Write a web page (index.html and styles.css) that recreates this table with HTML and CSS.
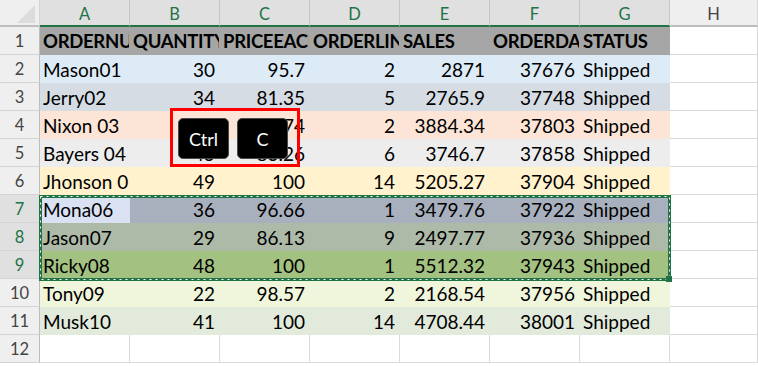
FILE: index.html
```html
<!DOCTYPE html>
<html>
<head>
<meta charset="utf-8">
<link rel="stylesheet" href="styles.css">
</head>
<body>
<div class="sheet">
  <div class="row colhead">
    <div class="corner"><svg width="39" height="25" viewBox="0 0 39 25"><polygon points="17,23 35,5 35,23" fill="#dcdcdc"/></svg></div>
    <div class="ch sel">A</div><div class="ch sel">B</div><div class="ch sel">C</div><div class="ch sel">D</div><div class="ch sel">E</div><div class="ch sel">F</div><div class="ch sel">G</div><div class="ch">H</div>
  </div>
  <div class="row r1">
    <div class="rh">1</div>
    <div class="c b">ORDERNUMBER</div><div class="c b">QUANTITYORDERED</div><div class="c b">PRICEEACH</div><div class="c b">ORDERLINENUMBER</div><div class="c b">SALES</div><div class="c b">ORDERDATE</div><div class="c b">STATUS</div><div class="c e"></div>
  </div>
  <div class="row r2">
    <div class="rh">2</div>
    <div class="c">Mason01</div><div class="c n">30</div><div class="c n">95.7</div><div class="c n">2</div><div class="c n">2871</div><div class="c n">37676</div><div class="c">Shipped</div><div class="c e"></div>
  </div>
  <div class="row r3">
    <div class="rh">3</div>
    <div class="c">Jerry02</div><div class="c n">34</div><div class="c n">81.35</div><div class="c n">5</div><div class="c n">2765.9</div><div class="c n">37748</div><div class="c">Shipped</div><div class="c e"></div>
  </div>
  <div class="row r4">
    <div class="rh">4</div>
    <div class="c">Nixon 03</div><div class="c n">41</div><div class="c n">94.74</div><div class="c n">2</div><div class="c n">3884.34</div><div class="c n">37803</div><div class="c">Shipped</div><div class="c e"></div>
  </div>
  <div class="row r5">
    <div class="rh">5</div>
    <div class="c">Bayers 04</div><div class="c n">45</div><div class="c n">83.26</div><div class="c n">6</div><div class="c n">3746.7</div><div class="c n">37858</div><div class="c">Shipped</div><div class="c e"></div>
  </div>
  <div class="row r6">
    <div class="rh">6</div>
    <div class="c">Jhonson 0</div><div class="c n">49</div><div class="c n">100</div><div class="c n">14</div><div class="c n">5205.27</div><div class="c n">37904</div><div class="c">Shipped</div><div class="c e"></div>
  </div>
  <div class="row r7">
    <div class="rh hs">7</div>
    <div class="c active">Mona06</div><div class="c n">36</div><div class="c n">96.66</div><div class="c n">1</div><div class="c n">3479.76</div><div class="c n">37922</div><div class="c">Shipped</div><div class="c e"></div>
  </div>
  <div class="row r8">
    <div class="rh hs">8</div>
    <div class="c">Jason07</div><div class="c n">29</div><div class="c n">86.13</div><div class="c n">9</div><div class="c n">2497.77</div><div class="c n">37936</div><div class="c">Shipped</div><div class="c e"></div>
  </div>
  <div class="row r9">
    <div class="rh hs">9</div>
    <div class="c">Ricky08</div><div class="c n">48</div><div class="c n">100</div><div class="c n">1</div><div class="c n">5512.32</div><div class="c n">37943</div><div class="c">Shipped</div><div class="c e"></div>
  </div>
  <div class="row r10">
    <div class="rh">10</div>
    <div class="c">Tony09</div><div class="c n">22</div><div class="c n">98.57</div><div class="c n">2</div><div class="c n">2168.54</div><div class="c n">37956</div><div class="c">Shipped</div><div class="c e"></div>
  </div>
  <div class="row r11">
    <div class="rh">11</div>
    <div class="c">Musk10</div><div class="c n">41</div><div class="c n">100</div><div class="c n">14</div><div class="c n">4708.44</div><div class="c n">38001</div><div class="c">Shipped</div><div class="c e"></div>
  </div>
  <div class="row">
    <div class="rh">12</div>
    <div class="c e"></div><div class="c e"></div><div class="c e"></div><div class="c e"></div><div class="c e"></div><div class="c e"></div><div class="c e"></div><div class="c e"></div>
  </div>

  <div class="ants">
    <svg class="dash" width="632" height="86" viewBox="0 0 632 86"><rect x="1.5" y="1.5" width="629" height="83" fill="none" stroke="#ffffff" stroke-width="1" stroke-dasharray="2 4"/></svg>
    <span class="handle"></span>
  </div>

  <div class="keys">
    <div class="key">Ctrl</div>
    <div class="key">C</div>
  </div>
</div>
</body>
</html>
```
FILE: styles.css
```css
* { box-sizing: border-box; }
html, body { margin: 0; padding: 0; background: #ffffff; }
body { width: 758px; height: 366px; overflow: hidden; font-family: Lato, "Liberation Sans", sans-serif; color: #000; }

.sheet { position: relative; display: flex; flex-direction: column; width: 758px; height: 366px; overflow: hidden; }

.row { display: grid; grid-template-columns: 40px repeat(7, 90px) 1fr; }

.colhead { height: 27px; }
.corner { background: #efefef; border-right: 1px solid #d4d4d4; border-bottom: 2px solid #bdbdbd; height: 27px; }
.corner svg { display: block; }
.ch { height: 27px; background: #efefef; border-right: 1px solid #d4d4d4; border-bottom: 2px solid #bdbdbd; text-align: center; font-size: 16.5px; line-height: 25px; padding-top: 2px; color: #444; }
.ch.sel { background: #e0e0e0; color: #217346; border-bottom-color: #217346; border-right-color: #c6c6c6; }

.rh { height: 28px; background: #efefef; border-right: 1px solid #bdbdbd; border-bottom: 1px solid #d4d4d4; text-align: center; font-size: 16.5px; line-height: 27px; padding-top: 1px; color: #444; }
.rh.hs { background: #e0e0e0; color: #217346; }

.c { height: 28px; border-right: 1px solid #dadada; border-bottom: 1px solid #dadada; padding: 1px 3px 0 3px; font-size: 19px; line-height: 27px; white-space: nowrap; overflow: hidden; }
.c.n { text-align: right; padding-right: 4px; }
.c.b { font-weight: 700; font-size: 18.5px; letter-spacing: -0.3px; }

.r1 .c:not(.e) { background: #a6a6a6; border-color: transparent; }
.r2 .c:not(.e) { background: #ddebf7; border-color: transparent; }
.r3 .c:not(.e) { background: #d6dce4; border-color: transparent; }
.r4 .c:not(.e) { background: #fce4d6; border-color: transparent; }
.r5 .c:not(.e) { background: #ededed; border-color: transparent; }
.r6 .c:not(.e) { background: #fff2cc; border-color: transparent; }
.r7 .c:not(.e) { background: #a8afbd; border-color: transparent; }
.r7 .c.active { background: #dae1f2; }
.r8 .c:not(.e) { background: #aebaa8; border-color: transparent; }
.r9 .c:not(.e) { background: #a3c180; border-color: transparent; }
.r10 .c:not(.e) { background: #f0f6dc; border-color: transparent; }
.r11 .c:not(.e) { background: #e2eadb; border-color: transparent; }

.ants { position: absolute; left: 39px; top: 195px; width: 632px; height: 86px; border: 3px solid #217346; }
.ants .dash { position: absolute; left: -3px; top: -3px; }
.handle { position: absolute; right: -4px; bottom: -4px; width: 6px; height: 6px; background: #217346; }

.keys { position: absolute; left: 170px; top: 108px; width: 130px; height: 59px; border: 3px solid #ff0000; display: flex; gap: 8px; padding: 7px 0 0 5px; }
.key { width: 51px; height: 41px; background: #000; border: 1px solid #4a4a4a; border-radius: 5px; color: #fff; font-size: 18px; display: flex; align-items: center; justify-content: center; }
```
